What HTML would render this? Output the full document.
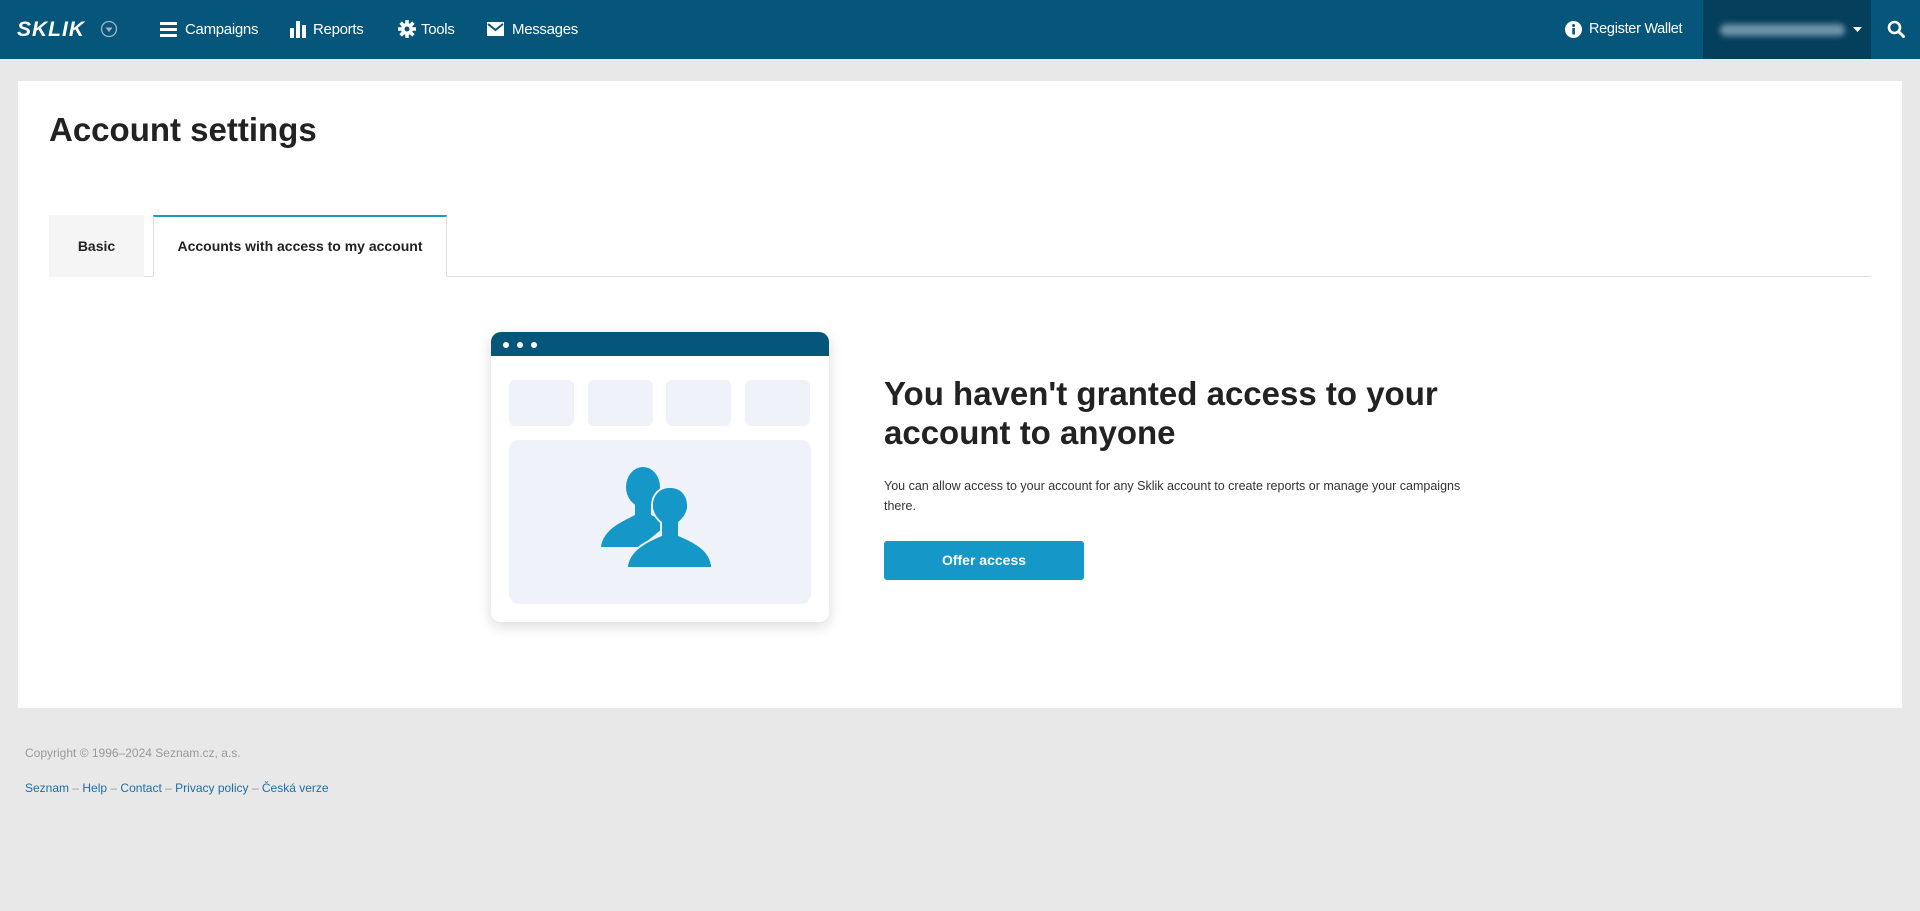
<!DOCTYPE html>
<html><head><meta charset="utf-8"><style>
*{box-sizing:border-box;margin:0;padding:0}
body{width:1920px;height:911px;background:#e8e8e8;font-family:"Liberation Sans",sans-serif;position:relative;overflow:hidden;color:#222}
.hdr{position:absolute;left:0;top:0;width:1920px;height:59px;background:#06557a;color:#fff;font-size:15px;letter-spacing:-0.3px}
.hdr .it{position:absolute;top:0;height:59px;line-height:59px;white-space:nowrap}
.acct{position:absolute;left:1703px;top:0;width:168px;height:59px;background:#043f5c}
.blur{position:absolute;left:17px;top:24px;width:125px;height:12px;background:#6f93a8;border-radius:6px;filter:blur(3px)}
.panel{position:absolute;left:18px;top:81px;width:1884px;height:627px;background:#fff}
h1{position:absolute;left:49px;top:111px;font-size:33px;font-weight:bold;color:#222}
.tabline{position:absolute;left:49px;top:276px;width:1822px;height:1px;background:#ddd}
.tab{position:absolute;top:215px;height:62px;line-height:62px;font-size:14px;font-weight:bold;text-align:center}
.card{position:absolute;left:491px;top:332px;width:338px;height:290px;background:#fff;border-radius:10px;box-shadow:0 4px 14px rgba(0,0,0,.15);overflow:hidden}
.bar{height:24px;background:#06557a;position:relative}
.dot{position:absolute;top:10px;width:6px;height:6px;border-radius:50%;background:#fff}
.sb{position:absolute;top:48px;width:65px;height:46px;background:#eff2f8;border-radius:6px}
.big{position:absolute;left:18px;top:108px;width:302px;height:164px;background:#eff2f8;border-radius:10px}
h2{position:absolute;left:884px;top:374px;font-size:33px;line-height:39px;font-weight:bold;color:#222;width:600px}
.p{position:absolute;left:884px;top:476px;font-size:12.5px;line-height:20px;color:#333;width:580px}
.btn{position:absolute;left:884px;top:541px;width:200px;height:39px;background:#1597c8;border-radius:3px;color:#fff;font-weight:bold;font-size:14px;text-align:center;line-height:39px}
.f1{position:absolute;left:25px;top:746px;font-size:12px;color:#999}
.f2{position:absolute;left:25px;top:781px;font-size:12px;color:#1a6fa8}
.f2 span{color:#999}
</style></head><body>
<div class="hdr">
 <div class="it" style="left:17px;font-weight:bold;font-style:italic;font-size:21px;letter-spacing:1px">SKLIK</div>
 <svg style="position:absolute;left:100px;top:20px" width="18" height="18" viewBox="0 0 18 18"><circle cx="9" cy="9" r="7.5" fill="none" stroke="#9fb8c8" stroke-width="1.3"/><path d="M5.5 7.5h7L9 12z" fill="#9fb8c8"/></svg>
 <svg style="position:absolute;left:160px;top:21px" width="17" height="16" viewBox="0 0 17 16"><rect y="1" width="17" height="3" fill="#fff"/><rect y="7" width="17" height="3" fill="#fff"/><rect y="13" width="17" height="3" fill="#fff"/></svg>
 <div class="it" style="left:185px">Campaigns</div>
 <svg style="position:absolute;left:290px;top:20px" width="17" height="18" viewBox="0 0 17 18"><rect y="8" width="4" height="10" fill="#fff"/><rect x="6" y="1" width="4" height="17" fill="#fff"/><rect x="12" y="5" width="4" height="13" fill="#fff"/></svg>
 <div class="it" style="left:313px">Reports</div>
 <svg style="position:absolute;left:398px;top:20px" width="18" height="18" viewBox="0 0 18 18"><circle cx="9" cy="9" r="6" fill="#fff"/><g stroke="#fff" stroke-width="3.5"><path d="M9 0v18M0 9h18M2.6 2.6l12.8 12.8M15.4 2.6L2.6 15.4"/></g><circle cx="9" cy="9" r="2.5" fill="#06557a"/></svg>
 <div class="it" style="left:421px">Tools</div>
 <svg style="position:absolute;left:487px;top:22px" width="17" height="14" viewBox="0 0 17 14"><rect width="17" height="14" fill="#fff"/><path d="M1 2l7.5 6L16 2" fill="none" stroke="#06557a" stroke-width="2"/></svg>
 <div class="it" style="left:512px">Messages</div>
 <svg style="position:absolute;left:1565px;top:21px" width="17" height="17" viewBox="0 0 17 17"><circle cx="8.5" cy="8.5" r="8.5" fill="#fff"/><rect x="7.3" y="7" width="2.6" height="6.5" fill="#06557a"/><circle cx="8.6" cy="4.5" r="1.5" fill="#06557a"/></svg>
 <div class="it" style="left:1589px;font-size:14.5px">Register Wallet</div>
 <div class="acct"><div class="blur"></div><svg style="position:absolute;left:150px;top:27px" width="9" height="5"><path d="M0 0h9L4.5 5z" fill="#fff"/></svg></div>
 <svg style="position:absolute;left:1887px;top:20px" width="18" height="18" viewBox="0 0 18 18"><circle cx="7.5" cy="7.5" r="5.5" fill="none" stroke="#fff" stroke-width="2.6"/><path d="M11.5 11.5l5 5" stroke="#fff" stroke-width="3" stroke-linecap="round"/></svg>
</div>
<div class="panel"></div>
<h1>Account settings</h1>
<div class="tabline"></div>
<div class="tab" style="left:49px;width:95px;background:#f5f5f5;color:#222">Basic</div>
<div class="tab" style="left:153px;width:294px;background:#fff;border:1px solid #ddd;border-top:2px solid #1b98c9;border-bottom:1px solid #fff;line-height:58px">Accounts with access to my account</div>
<div class="card">
 <div class="bar"><div class="dot" style="left:12px"></div><div class="dot" style="left:26px"></div><div class="dot" style="left:40px"></div></div>
 <div class="sb" style="left:18px"></div><div class="sb" style="left:97px"></div><div class="sb" style="left:175px"></div><div class="sb" style="left:254px"></div>
 <div class="big">
  <svg style="position:absolute;left:91px;top:26px" width="114" height="104" viewBox="0 0 114 104">
   <g fill="#1597c8">
    <ellipse cx="43" cy="21" rx="17" ry="20"/>
    <rect x="35" y="34" width="16" height="16"/>
    <path d="M1 81C3 64 21 56 35 49L51 49C58 52 64 55 68 58L40 81Z"/>
   </g>
   <g fill="#1597c8" stroke="#eff2f8" stroke-width="4" paint-order="stroke">
    <path d="M28 101C30 84 48 76 62 70L62 56C56 51 53 45 53 40C53 29 60 22 70 22C80 22 87 29 87 40C87 45 84 51 78 56L78 70C92 76 110 84 111 101Z"/>
   </g>
   <path d="M28 101C30 84 48 76 62 70L62 56C56 51 53 45 53 40C53 29 60 22 70 22C80 22 87 29 87 40C87 45 84 51 78 56L78 70C92 76 110 84 111 101Z" fill="#1597c8"/>
  </svg>
 </div>
</div>
<h2>You haven't granted access to your account to anyone</h2>
<div class="p">You can allow access to your account for any Sklik account to create reports or manage your campaigns there.</div>
<div class="btn">Offer access</div>
<div class="f1">Copyright © 1996–2024 Seznam.cz, a.s.</div>
<div class="f2">Seznam <span>–</span> Help <span>–</span> Contact <span>–</span> Privacy policy <span>–</span> Česká verze</div>
</body></html>
